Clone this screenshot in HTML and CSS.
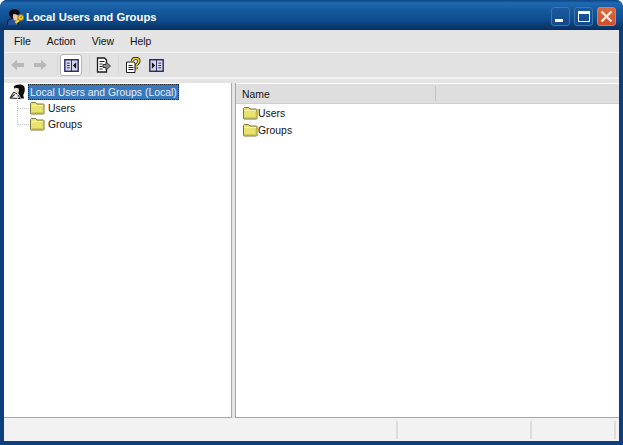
FILE: index.html
```html
<!DOCTYPE html>
<html>
<head>
    <title>Local Users and Groups</title>
    <link rel="stylesheet" href="styles.css">
</head>
<body>
<svg class="defs" width="0" height="0">
    <symbol id="folder" viewBox="0 0 16 14">
        <path d="M1.500 12.500V2.500l1-1h4l1.500 1.500h6.500l.5.500v9l-.5.500h-12.500z" fill="#e8e270" stroke="#77723f"/>
        <path d="M2.500 4.500h11.500" stroke="#f8f4b0"/>
        <path d="M3 11.500h11V6" fill="none" stroke="#d2c94f"/>
    </symbol>
    <symbol id="titleicon" viewBox="1 0 16 15">
        <path d="M1 16l1-5 4-2 5 3 1 4z" fill="#2a4f9a" stroke="#0b1b3f"/>
        <path d="M3 6C2 2 6 0 9 1c3 0 4 2 4 4l-2 1-3-1-1 4H5z" fill="#0a0a14"/>
        <path d="M7 5l4 1 .5 3-1.500 2.500L7.500 11 6.500 8z" fill="#f0c8a0"/>
        <path d="M9 13.500l3.500-3" stroke="#f0d030" stroke-width="2.400"/>
        <circle cx="14" cy="8.500" r="2.800" fill="#f0d030" stroke="#8a6a10" stroke-width=".8"/>
        <circle cx="14.300" cy="8.200" r=".8" fill="#3a5f9a"/>
    </symbol>
    <symbol id="rooticon" viewBox="0 0 18 17">
        <path d="M1 15.500L5 9l4 2.500 3 4.500z" fill="#f2f2f2" stroke="#111"/>
        <path d="M5 3.500C7 .500 14 0 16 3c1.500 3 .5 7-1 9.500l1 3.500h-3l-3-5.500L7 8z" fill="#0c0c0c"/>
        <path d="M6.500 4.500l3.500.500.500 2.500-.5 2.500-2-.5L6 6.500z" fill="#ece4dc"/>
        <path d="M2 15l4-3.500" stroke="#111" stroke-width="1.200"/>
    </symbol>
</svg>
<div class="window">
    <div class="titlebar">
        <svg class="title-icon"><use href="#titleicon"/></svg>
        <span class="title-text">Local Users and Groups</span>
        <div class="title-buttons">
            <div class="tbtn"><span class="min-mark"></span></div>
            <div class="tbtn"><span class="max-mark"></span></div>
            <div class="tbtn close">
                <svg width="15" height="15" viewBox="0 0 15 15"><path d="M2.500 2.500l10 10M12.500 2.500l-10 10" stroke="#fbeee6" stroke-width="2.400"/></svg>
            </div>
        </div>
    </div>
    <div class="inner">
        <div class="menubar">
            <span class="menu-item">File</span>
            <span class="menu-item">Action</span>
            <span class="menu-item">View</span>
            <span class="menu-item">Help</span>
        </div>
        <div class="toolbar">
            <svg class="tool back" width="16" height="16" viewBox="0 0 16 16"><path d="M1 8l6-5v3h7v4H7v3z" fill="#b8b8b8"/></svg>
            <svg class="tool forward" width="16" height="16" viewBox="0 0 16 16"><path d="M15 8L9 3v3H2v4h7v3z" fill="#b8b8b8"/></svg>
            <span class="tool-sep"></span>
            <div class="tool-active">
                <svg width="15" height="13" viewBox="0 0 16 14"><rect x=".8" y=".8" width="14.400" height="12.400" fill="#d6d6ea" stroke="#26265e" stroke-width="1.500"/><path d="M8 0v14" stroke="#26265e"/><path d="M3 4.500h3M3 7h3M3 9.500h3" stroke="#26265e"/><path d="M13 3.500v7L9.500 7z" fill="#111"/></svg>
            </div>
            <span class="tool-sep after-active"></span>
            <svg class="tool doc" width="16" height="16" viewBox="0 0 16 16"><path d="M1.500 1h7l2 2v12h-9z" fill="#fff" stroke="#1a1a1a" stroke-width="1.300"/><path d="M3.500 4.500h5M3.500 7h3M3.500 9.500h3M3.500 12h3" stroke="#1a1a1a"/><path d="M7 7.500h3V5l4.500 4-4.500 4v-2.500H7z" fill="#8c8c8c" stroke="#1a1a1a" stroke-width=".8"/></svg>
            <span class="tool-sep after-doc"></span>
            <svg class="tool help" width="16" height="16" viewBox="0 0 16 16"><path d="M1.500 5h7.500l1 1v9.500h-8.500z" fill="#fff" stroke="#1a1a1a"/><path d="M3.500 8.500h4M3.500 10.500h5M3.500 12.500h5" stroke="#1a1a1a"/><path d="M7.500 4c0-3.500 6.500-3.500 6.500 0 0 2.500-2.500 2.500-2.500 4.500" fill="none" stroke="#1a1a1a" stroke-width="3"/><path d="M7.500 4c0-3.500 6.500-3.500 6.500 0 0 2.500-2.500 2.500-2.500 4.500" fill="none" stroke="#f0d838" stroke-width="1.500"/><path d="M10.500 10h2v2h-2z" fill="#f0d838" stroke="#1a1a1a" stroke-width=".5"/></svg>
            <svg class="tool" width="15" height="13" viewBox="0 0 16 14"><rect x=".8" y=".8" width="14.400" height="12.400" fill="#d6d6ea" stroke="#26265e" stroke-width="1.500"/><path d="M8 0v14" stroke="#26265e"/><path d="M10 4.500h3M10 7h3M10 9.500h3" stroke="#26265e"/><path d="M3 3.500v7L6.500 7z" fill="#111"/></svg>
        </div>
        <div class="panes">
            <div class="tree">
                <div class="tree-root">
                    <svg class="root-icon"><use href="#rooticon"/></svg>
                    <span class="selected">Local Users and Groups (Local)</span>
                </div>
                <div class="tree-child">
                    <span class="dots"></span>
                    <svg class="folder"><use href="#folder"/></svg>
                    <span class="tree-label">Users</span>
                </div>
                <div class="tree-child">
                    <span class="dots"></span>
                    <svg class="folder"><use href="#folder"/></svg>
                    <span class="tree-label">Groups</span>
                </div>
            </div>
            <div class="list">
                <div class="list-head">
                    <div class="col-name">Name</div>
                    <div class="col-rest"></div>
                </div>
                <div class="list-row">
                    <svg class="folder"><use href="#folder"/></svg>
                    <span class="row-label">Users</span>
                </div>
                <div class="list-row">
                    <svg class="folder"><use href="#folder"/></svg>
                    <span class="row-label">Groups</span>
                </div>
            </div>
        </div>
        <div class="statusbar">
            <div class="st st-main"></div>
            <div class="st st-mid"></div>
            <div class="st st-end"></div>
        </div>
    </div>
</div>
</body>
</html>
```

FILE: styles.css
```css
html, body {
    margin: 0;
    padding: 0;
}

body {
    width: 623px;
    height: 445px;
    overflow: hidden;
    background: #fff;
    font-family: "Liberation Sans", Arial, sans-serif;
    font-size: 10.400px;
    color: #111;
}

.defs {
    display: block;
    height: 0;
}

.window {
    width: 623px;
    height: 445px;
    display: flex;
    flex-direction: column;
    box-sizing: border-box;
    background: #0d3f7c;
    border-radius: 7px 7px 0 0;
}

.titlebar {
    height: 30px;
    flex: none;
    display: flex;
    align-items: center;
    padding: 3px 7px 0 7px;
    box-sizing: border-box;
    border-radius: 7px 7px 0 0;
    background: linear-gradient(to bottom, #0b4686 0, #2069b0 3px, #155a9f 10px, #0e4c8e 20px, #08305f 30px);
}

.title-icon {
    width: 17px;
    height: 17px;
    margin-right: 2px;
}

.title-text {
    color: #fff;
    font-weight: bold;
    font-size: 11.300px;
}

.title-buttons {
    margin-left: auto;
    display: flex;
    gap: 4px;
    padding-bottom: 1px;
}

.tbtn {
    width: 19px;
    height: 19px;
    box-sizing: border-box;
    border: 1px solid #3f76ae;
    border-radius: 3px;
    background: linear-gradient(to bottom, #1a5a9e, #12498a);
    display: flex;
    align-items: center;
    justify-content: center;
}

.min-mark {
    width: 8px;
    height: 3px;
    background: #fff;
    margin: 8px 3px 0 0;
}

.max-mark {
    width: 12px;
    height: 11px;
    box-sizing: border-box;
    border: 1px solid #fff;
    border-top-width: 3px;
}

.close {
    background: linear-gradient(to bottom, #e0683e, #cf4f2a);
    border-color: #d8805f;
}

.inner {
    flex: 1;
    min-height: 0;
    display: flex;
    flex-direction: column;
    margin: 0 4px 4px 4px;
    background: #e4e4e4;
}

.menubar {
    height: 22px;
    flex: none;
    display: flex;
    align-items: center;
    padding-left: 10px;
    gap: 16px;
    border-bottom: 1px solid #f4f4f4;
}

.toolbar {
    height: 24px;
    flex: none;
    display: flex;
    align-items: center;
    padding-left: 6px;
    background: #e2e2e2;
    border-bottom: 2px solid #f2f2f2;
}

.tool {
    flex: none;
}

.back {
    margin-right: 6px;
}

.forward {
    margin-right: 9px;
}

.doc {
    margin-right: 6px;
}

.help {
    margin-right: 8px;
}

.tool-sep {
    width: 1px;
    height: 20px;
    background: #d8d8d8;
}

.after-active, .after-doc {
    margin-right: 6px;
}

.tool-active {
    width: 22px;
    height: 22px;
    box-sizing: border-box;
    background: #fff;
    border: 1px solid #b4b4b4;
    border-radius: 3px;
    display: flex;
    align-items: center;
    justify-content: center;
    margin: 0 7px 0 2px;
}

.panes {
    flex: 1;
    min-height: 0;
    display: flex;
    gap: 3px;
    padding-top: 4px;
}

.tree {
    width: 228px;
    box-sizing: border-box;
    background: #fff;
    border-right: 1px solid #a8a8a8;
    border-bottom: 1px solid #a8a8a8;
    padding-left: 5px;
}

.tree-root {
    height: 17px;
    display: flex;
    align-items: center;
}

.root-icon {
    width: 17px;
    height: 17px;
    margin-right: 2px;
}

.selected {
    background: #3a78bc;
    color: #e8eef8;
    border: 1px dotted #222;
    padding: 1px 1px 0 1px;
    height: 13px;
    line-height: 14px;
    white-space: nowrap;
}

.tree-child {
    height: 16px;
    display: flex;
    align-items: center;
    padding-left: 8px;
}

.dots {
    width: 11px;
    height: 16px;
    margin-top: -16px;
    flex: none;
    border-left: 1px dotted #c0c0c0;
    border-bottom: 1px dotted #c0c0c0;
}

.folder {
    width: 16px;
    height: 14px;
    flex: none;
}

.tree-label {
    margin-left: 3px;
}

.list {
    flex: 1;
    background: #fff;
    border-left: 1px solid #a8a8a8;
    border-bottom: 1px solid #a8a8a8;
    padding-top: 1px;
}

.list-head {
    height: 19px;
    display: flex;
    background: #dedede;
    border-bottom: 1px solid #cfcfcf;
}

.col-name {
    width: 200px;
    box-sizing: border-box;
    padding: 3px 0 0 6px;
    border-right: 1px solid #c4c4c4;
    margin-top: 2px;
    line-height: 12px;
    height: 15px;
}

.col-rest {
    flex: 1;
}

.list-row {
    height: 17px;
    display: flex;
    align-items: center;
    padding-left: 6px;
}

.row-label {
    padding-top: 2px;
}

.statusbar {
    height: 23px;
    flex: none;
    display: flex;
    background: #f2f2f2;
    padding-top: 1px;
    box-sizing: border-box;
}

.st {
    box-sizing: border-box;
    border-right: 2px solid #dcdcdc;
    margin: 2px 0;
}

.st-main {
    width: 394px;
}

.st-mid {
    width: 134px;
}

.st-end {
    width: 84px;
}
```
